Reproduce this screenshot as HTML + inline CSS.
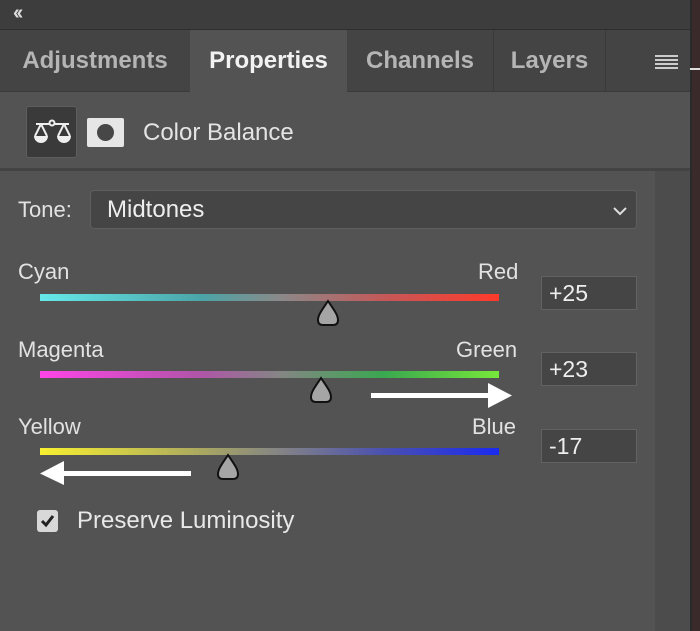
<!DOCTYPE html>
<html><head><style>
body{margin:0;width:700px;height:631px;overflow:hidden;background:#535353;font-family:"Liberation Sans",sans-serif;position:relative;color:#e6e6e6}
div,span{position:absolute;box-sizing:border-box}
.tab{top:30px;height:62px;font-weight:bold;font-size:24px;line-height:62px;color:#b5b5b5;text-align:center}
.lbl{font-size:22px;color:#e2e2e2}
.track{left:40px;width:459px;height:7px}
.val{left:541px;width:96px;height:34px;background:#454545;border:1px solid #626262;font-size:23px;line-height:32px;padding-left:7px;color:#eee}
</style></head><body>
<div style="left:0;top:0;width:700px;height:30px;background:#3d3d3d;border-bottom:1px solid #2e2e2e"></div>
<div style="left:13px;top:2px;font-size:20px;font-weight:bold;color:#ddd;letter-spacing:-3px">‹‹</div>
<div style="left:0;top:30px;width:690px;height:62px;background:#444;border-bottom:1px solid #3a3a3a"></div>
<div class="tab" style="left:0;width:190px">Adjustments</div>
<div class="tab" style="left:190px;width:157px;background:#535353;color:#f2f2f2;height:63px">Properties</div>
<div class="tab" style="left:347px;width:146px">Channels</div>
<div style="left:493px;top:30px;width:1px;height:62px;background:#3a3a3a"></div>
<div class="tab" style="left:494px;width:111px">Layers</div>
<div style="left:605px;top:30px;width:1px;height:62px;background:#3a3a3a"></div>
<div style="left:655px;top:55px;width:23px;height:2px;background:#ccc;box-shadow:0 4px 0 #ccc,0 8px 0 #ccc,0 12px 0 #ccc"></div>
<div style="left:690px;top:0;width:10px;height:631px;background:#3a2a2a;border-left:2px solid #2a2a2a"></div>
<div style="left:690px;top:68px;width:10px;height:2px;background:#ddd"></div>
<div style="left:0;top:168px;width:690px;height:3px;background:#434343"></div>
<div style="left:655px;top:171px;width:35px;height:460px;background:#4c4c4c"></div>
<div style="left:26px;top:106px;width:51px;height:52px;background:#3a3a3a;border:1px solid #5e5e5e;border-radius:3px">
<svg width="51" height="52" viewBox="0 0 51 52"><g stroke="#eee" stroke-width="2" fill="none"><circle cx="25" cy="16" r="2.5"/><line x1="9" y1="17" x2="22" y2="17"/><line x1="28" y1="17" x2="42" y2="17"/><path d="M14 17 L8 29 M14 17 L20 29 M37 17 L31 29 M37 17 L43 29"/></g><path d="M7 29 H21 A7 7 0 0 1 7 29Z M30 29 H44 A7 7 0 0 1 30 29Z" fill="#eee"/></svg></div>
<div style="left:87px;top:118px;width:37px;height:29px;background:#e6e6e6;border-radius:2px"><div style="left:10px;top:6px;width:17px;height:17px;border-radius:50%;background:#474747"></div></div>
<div style="left:143px;top:119px;font-size:24px;color:#e4e4e4">Color Balance</div>
<div class="lbl" style="left:18px;top:197px">Tone:</div>
<div style="left:90px;top:190px;width:547px;height:39px;background:#454545;border:1px solid #5f5f5f;border-radius:4px"></div>
<div style="left:107px;top:196px;font-size:24px;color:#eee">Midtones</div>
<svg style="position:absolute;left:612px;top:206px" width="16" height="10"><path d="M2 2 L8 8 L14 2" stroke="#ddd" stroke-width="2" fill="none"/></svg>
<div class="lbl" style="left:18px;top:259px">Cyan</div><div class="lbl" style="left:478px;top:259px">Red</div>
<div class="track" style="top:294px;background:linear-gradient(90deg,#66e8ea,#4aa5a8 35%,#8a8a8a 52%,#c55858 75%,#ff3a2a)"></div>
<div class="val" style="top:276px">+25</div>
<div class="lbl" style="left:18px;top:337px">Magenta</div><div class="lbl" style="left:456px;top:337px">Green</div>
<div class="track" style="top:371px;background:linear-gradient(90deg,#ff44e8,#b055a8 35%,#858585 52%,#3aa850 75%,#77e83a)"></div>
<div class="val" style="top:352px">+23</div>
<div class="lbl" style="left:18px;top:414px">Yellow</div><div class="lbl" style="left:472px;top:414px">Blue</div>
<div class="track" style="top:448px;background:linear-gradient(90deg,#f8f030,#aaa860 35%,#858585 52%,#4a50b0 75%,#1a2af0)"></div>
<div class="val" style="top:429px">-17</div>
<svg style="position:absolute;left:0;top:0" width="700" height="631">
<g fill="#a5a5a5" stroke="#111" stroke-width="2">
<path d="M328 301 C322 310 318 315 318 320 Q318 325 323 325 H333 Q338 325 338 320 C338 315 334 310 328 301Z"/>
<path d="M321 378 C315 387 311 392 311 397 Q311 402 316 402 H326 Q331 402 331 397 C331 392 327 387 321 378Z"/>
<path d="M228 455 C222 464 218 469 218 474 Q218 479 223 479 H233 Q238 479 238 474 C238 469 234 464 228 455Z"/></g>
<g fill="#fff"><rect x="371" y="393" width="120" height="5"/><path d="M488 383 L512 395.5 L488 408Z"/>
<rect x="62" y="471" width="129" height="5"/><path d="M64 461 L40 473.5 L64 485Z"/></g>
</svg>
<div style="left:37px;top:510px;width:21px;height:22px;background:#d8d8d8;border-radius:3px"></div>
<svg style="position:absolute;left:39px;top:513px" width="17" height="16"><path d="M3 8 L7 12 L14 3" stroke="#222" stroke-width="3" fill="none"/></svg>
<div style="left:77px;top:507px;font-size:24px;color:#e8e8e8">Preserve Luminosity</div>
</body></html>
